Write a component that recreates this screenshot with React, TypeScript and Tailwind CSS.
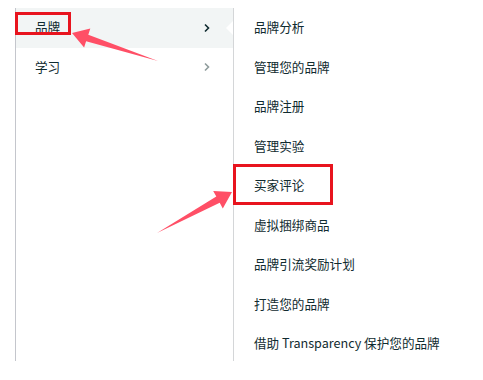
const font = { fontFamily: '"Noto Sans CJK SC", "Noto Sans", sans-serif' };

const leftItems = [
  { label: '品牌', active: true },
  { label: '学习', active: false },
];

const rightItems = [
  '品牌分析',
  '管理您的品牌',
  '品牌注册',
  '管理实验',
  '买家评论',
  '虚拟捆绑商品',
  '品牌引流奖励计划',
  '打造您的品牌',
  '借助 Transparency 保护您的品牌',
];

const Chevron = ({ active }: { active: boolean }) => (
  <svg width="8" height="10" viewBox="0 0 8 10" fill="none">
    <polyline
      points="2,1.5 5.5,5 2,8.5"
      stroke={active ? '#0f2a2e' : '#8f9c9c'}
      strokeWidth="1.6"
    />
  </svg>
);

export default function App() {
  return (
    <div className="relative h-[380px] w-[483px] bg-white text-[12.6px] text-[#102b2f]" style={font}>
      <div className="flex pl-[15px] pt-[8px]">
        <div className="h-[353px] w-[218px] border-l border-[#c4c6cc]">
          {leftItems.map((item) => (
            <div
              key={item.label}
              className={`relative flex h-[39.5px] items-center justify-between pl-[19px] pr-[22px] ${
                item.active ? 'bg-[#f2f5f5]' : ''
              }`}
            >
              <span>{item.label}</span>
              <Chevron active={item.active} />
              {item.active && (
                <span className="absolute right-0 top-[13px] h-0 w-0 border-y-[7px] border-r-[7px] border-y-transparent border-r-white" />
              )}
            </div>
          ))}
        </div>
        <div className="h-[353px] border-l border-[#d4d6d8] pl-[20px]">
          {rightItems.map((label) => (
            <div key={label} className="flex h-[39.5px] items-center whitespace-nowrap">
              {label}
            </div>
          ))}
        </div>
      </div>

      <div className="absolute left-[15px] top-[12px] h-[23px] w-[56px] border-[3px] border-[#e8141e]" />
      <div className="absolute left-[233px] top-[164px] h-[41px] w-[100px] border-[3px] border-[#e8141e]" />

      <svg className="pointer-events-none absolute left-0 top-0" width="483" height="380">
        <polygon
          points="72,33 90.3,28.5 88.3,34.7 158,61 86.1,41.3 84.1,47.5"
          fill="#ff4f66"
        />
        <polygon
          points="232,192 213.2,190.9 216.3,196.6 157,233 219.7,202.8 222.8,208.5"
          fill="#ff4f66"
        />
      </svg>
    </div>
  );
}
